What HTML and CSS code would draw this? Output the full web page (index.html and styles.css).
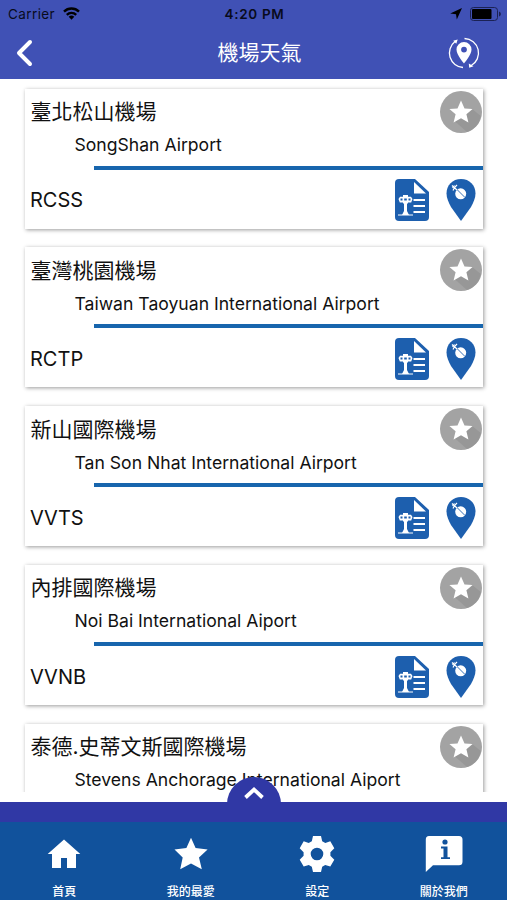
FILE: index.html
```html
<!DOCTYPE html>
<html lang="zh-Hant">
<head>
    <meta charset="UTF-8">
    <meta name="viewport" content="width=device-width, initial-scale=1.0">
    <title>機場天氣</title>
    <link rel="stylesheet" href="styles.css">
</head>
<body>
    <!-- shared icons -->
    <svg class="sprite" width="0" height="0">
        <symbol id="star" viewBox="0 0 42 42">
            <circle cx="21" cy="21" r="21" fill="#a3a3a3"/>
            <path fill="#979797" d="M31.500 17.500l9.300 7.500A21 21 0 0 1 27 41.100l-12.500-11z"/>
            <path fill="#fff" d="M21 9.500l3.500 7.900 8.100.6-6.200 5.300 2 8.200-7.400-4.300-7.400 4.300 2-8.200L9.400 18l8.100-.6z"/>
        </symbol>
        <symbol id="report" viewBox="0 0 34 42">
            <path fill="#1d5fae" d="M4 0h16l14 13v25a4 4 0 0 1-4 4H4a4 4 0 0 1-4-4V4a4 4 0 0 1 4-4z"/>
            <path fill="#fff" d="M19 3v11.500h12z"/>
            <path stroke="#fff" stroke-width="2.200" d="M18.500 21h11.500M18.500 27h11.500M18.500 33h11.500"/>
            <path fill="#fff" d="M8 16h5v1.700h3l1.500 2.300-1.300 3.500H13v1h-1V32l2 4H7l2-4v-7.500H8v-1H4.800L3.500 20 5 17.700h3z"/>
            <path stroke="#1d5fae" stroke-width="2" d="M5.500 20.500h2M9.200 20.500h2.600M13.500 20.500h2"/>
            <path stroke="#fff" stroke-width="1" d="M3 36h15"/>
        </symbol>
        <symbol id="pin" viewBox="0 0 30 42">
            <path fill="#1d5fae" d="M15 0C6.500 0 .5 6.300.5 14.500c0 4.500 2.200 9 4.500 13.500L15 42l10-14c2.300-4.500 4.500-9 4.500-13.500C29.500 6.300 23.500 0 15 0z"/>
            <circle cx="14.700" cy="14.800" r="5.500" fill="#fff"/>
            <path stroke="#1d5fae" stroke-width=".9" d="M11 10.500l8 8"/>
            <path stroke="#fff" stroke-width="1.200" fill="none" d="M6 6.500l5 4.500M11 6l-2.500 2.500-1.500 3M6.500 9l2-2.500"/>
        </symbol>
    </svg>

    <header class="header">
        <div class="status-bar">
            <div class="status-left">
                <span>Carrier</span>
                <svg width="17" height="13" viewBox="0 0 17 13">
                    <path fill="none" stroke="#000" stroke-width="2.400" d="M1 4.600a10.800 10.800 0 0 1 15 0M3.800 7.800a6.800 6.800 0 0 1 9.400 0"/>
                    <path d="M8.500 12.800L5.700 9.800a4 4 0 0 1 5.600 0z"/>
                </svg>
            </div>
            <div class="status-time">4:20 PM</div>
            <div class="status-right">
                <svg width="12" height="12" viewBox="0 0 12 12"><path d="M12 0L6.800 11.500 6 6.200.2 5.500z"/></svg>
                <svg width="31" height="14" viewBox="0 0 31 14">
                    <rect x=".5" y=".5" width="27" height="13" rx="3" fill="none" stroke="#1b2254"/>
                    <rect x="2" y="2" width="19.500" height="10" rx="1"/>
                    <path fill="#1b2254" d="M29 4.500c2.500.8 2.500 4.200 0 5z"/>
                </svg>
            </div>
        </div>
        <div class="title-bar">
            <svg class="back" width="18" height="28" viewBox="0 0 18 28">
                <path fill="none" stroke="#fff" stroke-width="4" stroke-linecap="round" stroke-linejoin="round" d="M15 3L4 14l11 11"/>
            </svg>
            <h1>機場天氣</h1>
            <svg class="locate" width="32" height="32" viewBox="0 0 32 32">
                <path fill="none" stroke="#fff" stroke-width="1.300" d="M15 30.500A14.500 14.500 0 0 1 7 4.600M16.500 1.500A14.500 14.500 0 0 1 23 28.700"/>
                <path fill="#fff" d="M5.200 3.700l4.500-1.200-1.400 4.200zM20.800 26.500l.4 4.300 4.300-1.500z"/>
                <path fill="#fff" fill-rule="evenodd" d="M16 5a7.500 7.500 0 0 0-7.500 7.500C8.500 18 16 26.500 16 26.500s7.500-8.500 7.500-14A7.500 7.500 0 0 0 16 5zm0 4.700a2.900 2.900 0 1 1 0 5.800 2.900 2.900 0 0 1 0-5.800z"/>
            </svg>
        </div>
    </header>

    <main class="list">
        <article class="card">
            <div class="card-top">
                <h2>臺北松山機場</h2>
                <p>SongShan Airport</p>
                <button class="favorite"><svg><use href="#star"/></svg></button>
            </div>
            <div class="card-bottom">
                <span class="code">RCSS</span>
                <svg class="report"><use href="#report"/></svg>
                <svg class="pin"><use href="#pin"/></svg>
            </div>
        </article>
        <article class="card">
            <div class="card-top">
                <h2>臺灣桃園機場</h2>
                <p>Taiwan Taoyuan International Airport</p>
                <button class="favorite"><svg><use href="#star"/></svg></button>
            </div>
            <div class="card-bottom">
                <span class="code">RCTP</span>
                <svg class="report"><use href="#report"/></svg>
                <svg class="pin"><use href="#pin"/></svg>
            </div>
        </article>
        <article class="card">
            <div class="card-top">
                <h2>新山國際機場</h2>
                <p>Tan Son Nhat International Airport</p>
                <button class="favorite"><svg><use href="#star"/></svg></button>
            </div>
            <div class="card-bottom">
                <span class="code">VVTS</span>
                <svg class="report"><use href="#report"/></svg>
                <svg class="pin"><use href="#pin"/></svg>
            </div>
        </article>
        <article class="card">
            <div class="card-top">
                <h2>內排國際機場</h2>
                <p>Noi Bai International Aiport</p>
                <button class="favorite"><svg><use href="#star"/></svg></button>
            </div>
            <div class="card-bottom">
                <span class="code">VVNB</span>
                <svg class="report"><use href="#report"/></svg>
                <svg class="pin"><use href="#pin"/></svg>
            </div>
        </article>
        <article class="card">
            <div class="card-top">
                <h2>泰德.史蒂文斯國際機場</h2>
                <p>Stevens Anchorage International Aiport</p>
                <button class="favorite"><svg><use href="#star"/></svg></button>
            </div>
        </article>
    </main>

    <footer class="footer">
        <div class="drawer">
            <button class="drawer-toggle">
                <svg width="20" height="14" viewBox="0 0 20 14">
                    <path fill="none" stroke="#fff" stroke-width="3.800" d="M1.500 11.500L10 3.500l8.500 8"/>
                </svg>
            </button>
        </div>
        <nav class="tabs">
            <a class="tab">
                <svg width="36" height="36" viewBox="0 0 36 36"><path d="M18 3.500L34.300 18H30v14H21V22h-6v10H6V18H1.700z"/></svg>
                <span>首頁</span>
            </a>
            <a class="tab">
                <svg width="36" height="36" viewBox="0 0 36 36"><path d="M18 1.700l4.600 10.400 12 1.300-8.600 8.100 2.800 11.700L18 27.500 7.200 33.200l2.500-11.700-8.200-8.100 11.900-1.300z"/></svg>
                <span>我的最愛</span>
            </a>
            <a class="tab">
                <svg width="36" height="36" viewBox="0 0 36 36"><path fill-rule="evenodd" d="M14 0h8l1.200 5.200 3.100 1.800 5-1.700 4 6.900-3.900 4v3.600l3.900 3.900-4 6.900-5.100-1.600-3 1.800L22 36h-8l-1.200-5.200-3-1.800-5.100 1.600-4-6.900 3.900-3.900v-3.600l-3.900-4 4-6.900 5 1.700 3.100-1.800zM18 11.700a6.300 6.300 0 1 0 0 12.600 6.300 6.300 0 0 0 0-12.600z"/></svg>
                <span>設定</span>
            </a>
            <a class="tab">
                <svg width="38" height="36" viewBox="0 0 38 36">
                    <path d="M4 0h30a3.500 3.500 0 0 1 3.500 3.500v22.200a3.500 3.500 0 0 1-3.500 3.500H8L.8 36V3.500A3.500 3.500 0 0 1 4 0z"/>
                    <circle cx="20" cy="6" r="2.600" fill="#11529c"/>
                    <path fill="#11529c" d="M16 10.500h6.500v10.700H25v1.900h-9v-1.900h2.500v-8.800H16z"/>
                </svg>
                <span>關於我們</span>
            </a>
        </nav>
    </footer>
</body>
</html>
```
FILE: styles.css
```css
:root {
    --header: #4051b5;
    --primary: #1765ad;
    --drawer: #3038a5;
    --tabs: #11529c;
}

* {
    margin: 0;
    padding: 0;
    box-sizing: border-box;
}

body {
    font-family: Inter, "Noto Sans CJK TC", sans-serif;
    width: 507px;
    height: 900px;
    background: #fff;
    color: #111;
    display: flex;
    flex-direction: column;
    overflow: hidden;
}

svg {
    display: block;
    flex-shrink: 0;
}

button {
    border: none;
    background: none;
    display: flex;
    align-items: center;
    justify-content: center;
}

.sprite {
    position: absolute;
}

.header {
    height: 79px;
    flex-shrink: 0;
    background: var(--header);
}

.status-bar {
    height: 27px;
    padding: 0 6px 0 8px;
    display: grid;
    grid-template-columns: 1fr auto 1fr;
    align-items: center;
    font-size: 13.5px;
    color: #080b1c;
}

.status-left,
.status-right {
    display: flex;
    align-items: center;
    gap: 8px;
}

.status-left {
    letter-spacing: 0.4px;
}

.status-right {
    justify-content: flex-end;
}

.status-time {
    font-weight: 600;
    letter-spacing: 0.7px;
}

.title-bar {
    height: 52px;
    padding: 0 27px 0 15px;
    display: grid;
    grid-template-columns: 1fr auto 1fr;
    align-items: center;
}

.title-bar h1 {
    font-size: 21px;
    font-weight: 400;
    line-height: 30px;
    color: #fff;
    padding-left: 24px;
}

.locate {
    justify-self: end;
}

.list {
    height: 713px;
    flex-shrink: 0;
    padding: 9.500px 24px 0 25px;
    display: flex;
    flex-direction: column;
    gap: 18.750px;
    overflow: hidden;
}

.card {
    height: 140px;
    flex-shrink: 0;
    background: #fff;
    box-shadow: 1px 1px 4px rgba(0, 0, 0, 0.4);
}

.card-top {
    height: 77.500px;
    padding: 8.500px 0 0 5.500px;
    position: relative;
}

.card-top h2 {
    font-size: 21px;
    font-weight: 400;
    line-height: 30px;
}

.card-top p {
    font-size: 17.600px;
    line-height: 24px;
    padding: 6px 0 0 44px;
}

.favorite {
    position: absolute;
    top: 2px;
    right: 1.500px;
}

.favorite svg {
    width: 42px;
    height: 42px;
}

.card-bottom {
    height: 62.500px;
    padding: 6px 7px 0 5px;
    display: flex;
    align-items: center;
    position: relative;
}

/* divider starts indented from the card edge */
.card-bottom::before {
    content: "";
    position: absolute;
    top: -0.500px;
    left: 69px;
    right: 0;
    height: 4px;
    background: var(--primary);
}

.code {
    flex: 1;
    font-size: 20px;
}

.report {
    width: 34px;
    height: 42px;
    margin-right: 17px;
}

.pin {
    width: 30px;
    height: 42px;
}

.footer {
    margin-top: 10px;
    flex-shrink: 0;
}

.drawer {
    height: 20px;
    background: var(--drawer);
    position: relative;
}

.drawer-toggle {
    position: absolute;
    left: 227px;
    top: -25px;
    width: 54px;
    height: 45px;
    padding-bottom: 14px;
    border-radius: 27px 27px 0 0;
    background: var(--drawer);
}

.tabs {
    height: 78px;
    padding-left: 1px;
    background: var(--tabs);
    display: flex;
}

.tab {
    flex: 1;
    padding-top: 14px;
    display: flex;
    flex-direction: column;
    align-items: center;
    gap: 11px;
    font-size: 12px;
    line-height: 18px;
    font-weight: 500;
    color: #fff;
}

.tab svg {
    fill: #fff;
}
```
